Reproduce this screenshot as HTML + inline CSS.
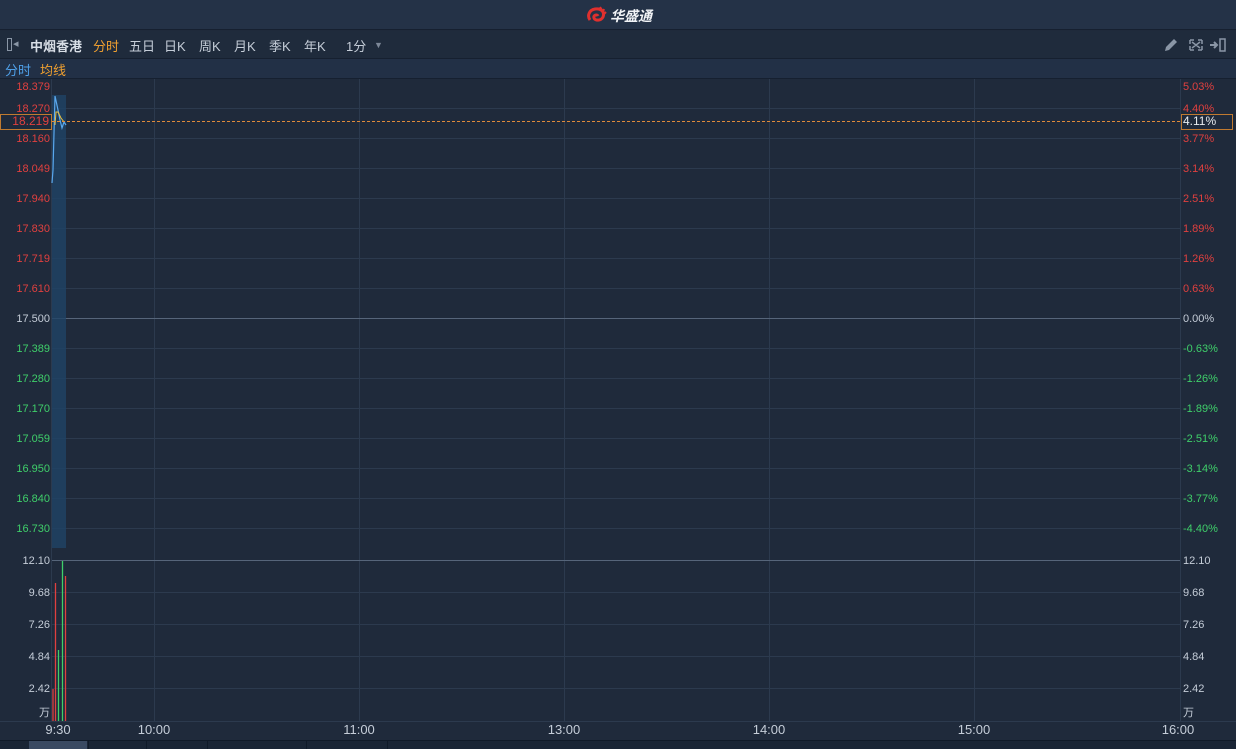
<!DOCTYPE html><html><head><meta charset="utf-8"><style>
*{margin:0;padding:0;box-sizing:border-box}
body{width:1236px;height:749px;overflow:hidden;background:#1f2a3b;font-family:"Liberation Sans","Noto Sans CJK SC",sans-serif;position:relative;font-size:13px}
.a{position:absolute;white-space:nowrap}
.l{position:absolute;left:0;width:50px;text-align:right;font-size:11px;line-height:12px}
.r{position:absolute;left:1183px;font-size:11px;line-height:12px}
.red{color:#e0403f}.grn{color:#3fcf6a}.wh{color:#c5cdd8}
.t{position:absolute;top:722px;font-size:13px;color:#c5cdd8;transform:translateX(-50%)}
</style></head><body>
<div class="a" style="left:0;top:0;width:1236px;height:30px;background:#243247;border-bottom:1px solid #162030"></div>
<svg class="a" style="left:586px;top:6px" width="22" height="18" viewBox="0 0 22 18"><path d="M4 14 C1 10 3 4 9 3 C15 2 19 6 17 11 C15 15 9 15 8 12 C7 9 11 8 12 10" stroke="#e0302e" stroke-width="3" fill="none"/><path d="M14 1 L16 4 M18 3 L17 6 M20 6 L18 8" stroke="#e0302e" stroke-width="2"/></svg>
<div class="a" style="left:610px;top:6px;font-size:14px;font-weight:bold;color:#f2f4f7;font-style:italic">华盛通</div>
<div class="a" style="left:0;top:31px;width:1236px;height:28px;background:#1f2b3c;border-bottom:1px solid #162030"></div>
<div class="a" style="left:7px;top:38px;width:5px;height:13px;border:1.5px solid #8a96a6"></div>
<div class="a" style="left:13px;top:37px;color:#8a96a6;font-size:11px">◂</div>
<div class="a" style="left:30px;top:36px;color:#d8dee6;font-weight:bold;font-size:13px">中烟香港</div>
<div class="a" style="left:93px;top:36px;color:#f0a030">分时</div>
<div class="a" style="left:129px;top:36px;color:#c5cdd8">五日</div>
<div class="a" style="left:164px;top:36px;color:#c5cdd8">日K</div>
<div class="a" style="left:199px;top:36px;color:#c5cdd8">周K</div>
<div class="a" style="left:234px;top:36px;color:#c5cdd8">月K</div>
<div class="a" style="left:269px;top:36px;color:#c5cdd8">季K</div>
<div class="a" style="left:304px;top:36px;color:#c5cdd8">年K</div>
<div class="a" style="left:346px;top:36px;color:#c5cdd8">1分</div>
<div class="a" style="left:374px;top:40px;color:#7d8898;font-size:9px">▼</div>
<svg class="a" style="left:1162px;top:37px" width="70" height="16"><path d="M3 14 L4 10 L12 2 L15 5 L7 13 Z" fill="#8a96a6"/><path d="M28 3h4M28 3v4M40 3h-4M40 3v4M28 13h4M28 13v-4M40 13h-4M40 13v-4M30 5l8 6M38 5l-8 6" stroke="#8a96a6" stroke-width="1.5" fill="none"/><path d="M48 8h6M52 5l3 3-3 3" stroke="#8a96a6" stroke-width="2" fill="none"/><rect x="58" y="2" width="5" height="12" stroke="#8a96a6" stroke-width="1.5" fill="none"/></svg>
<div class="a" style="left:0;top:59px;width:1236px;height:20px;background:#223046;border-bottom:1px solid #162030"></div>
<div class="a" style="left:5px;top:60px;color:#4fa0e8">分时</div>
<div class="a" style="left:40px;top:60px;color:#f0a030">均线</div>
<svg class="a" style="left:0;top:0" width="1236" height="749">
<g stroke="#2c3a4e" stroke-width="1">
<line x1="52" y1="108.5" x2="1180" y2="108.5"/><line x1="52" y1="138.5" x2="1180" y2="138.5"/><line x1="52" y1="168.5" x2="1180" y2="168.5"/><line x1="52" y1="198.5" x2="1180" y2="198.5"/><line x1="52" y1="228.5" x2="1180" y2="228.5"/><line x1="52" y1="258.5" x2="1180" y2="258.5"/><line x1="52" y1="288.5" x2="1180" y2="288.5"/><line x1="52" y1="348.5" x2="1180" y2="348.5"/><line x1="52" y1="378.5" x2="1180" y2="378.5"/><line x1="52" y1="408.5" x2="1180" y2="408.5"/><line x1="52" y1="438.5" x2="1180" y2="438.5"/><line x1="52" y1="468.5" x2="1180" y2="468.5"/><line x1="52" y1="498.5" x2="1180" y2="498.5"/><line x1="52" y1="528.5" x2="1180" y2="528.5"/>
<line x1="52" y1="592.5" x2="1180" y2="592.5"/><line x1="52" y1="624.5" x2="1180" y2="624.5"/><line x1="52" y1="656.5" x2="1180" y2="656.5"/><line x1="52" y1="688.5" x2="1180" y2="688.5"/><line x1="0" y1="721.5" x2="1236" y2="721.5"/>
<line x1="154.5" y1="79" x2="154.5" y2="721"/><line x1="359.5" y1="79" x2="359.5" y2="721"/><line x1="564.5" y1="79" x2="564.5" y2="721"/><line x1="769.5" y1="79" x2="769.5" y2="721"/><line x1="974.5" y1="79" x2="974.5" y2="721"/>
<line x1="51.5" y1="79" x2="51.5" y2="721"/><line x1="1180.5" y1="79" x2="1180.5" y2="721"/>
</g>
<line x1="52" y1="318.5" x2="1180" y2="318.5" stroke="#56657a"/>
<line x1="52" y1="560.5" x2="1180" y2="560.5" stroke="#56657a"/>
<rect x="52" y="95" width="14" height="453" fill="#1f4466" opacity="0.8"/>
<polyline points="52,183 53,170 55,96 58,110 60,120 62,128 64,122 66,125" fill="none" stroke="#5aa8ee" stroke-width="1.2"/>
<polyline points="55,125 56,112 58,112 61,118 64,122" fill="none" stroke="#e8c040" stroke-width="1"/>
<line x1="52" y1="121.5" x2="1180" y2="121.5" stroke="#e08a3a" stroke-dasharray="3,2"/>
<g stroke-width="1.3"><line x1="53" y1="689" x2="53" y2="721" stroke="#e0403f"/><line x1="55.5" y1="583" x2="55.5" y2="721" stroke="#e0403f"/><line x1="58.5" y1="650" x2="58.5" y2="721" stroke="#3fcf6a"/><line x1="62.5" y1="561" x2="62.5" y2="721" stroke="#3fcf6a"/><line x1="65.5" y1="576" x2="65.5" y2="721" stroke="#e0403f"/></g>
</svg>
<div class="a" style="left:0;top:114px;width:52px;height:16px;border:1px solid #c07a30;background:#1f2a3b"></div>
<div class="a" style="left:1181px;top:114px;width:52px;height:16px;border:1px solid #c07a30;background:#1f2a3b"></div>
<div class="l red" style="top:81px">18.379</div><div class="l red" style="top:103px">18.270</div>
<div class="l red" style="top:115px;font-size:12px;left:0;width:49px">18.219</div>
<div class="l red" style="top:133px">18.160</div><div class="l red" style="top:163px">18.049</div><div class="l red" style="top:193px">17.940</div><div class="l red" style="top:223px">17.830</div><div class="l red" style="top:253px">17.719</div><div class="l red" style="top:283px">17.610</div>
<div class="l wh" style="top:313px">17.500</div>
<div class="l grn" style="top:343px">17.389</div><div class="l grn" style="top:373px">17.280</div><div class="l grn" style="top:403px">17.170</div><div class="l grn" style="top:433px">17.059</div><div class="l grn" style="top:463px">16.950</div><div class="l grn" style="top:493px">16.840</div><div class="l grn" style="top:523px">16.730</div>
<div class="l wh" style="top:555px">12.10</div><div class="l wh" style="top:587px">9.68</div><div class="l wh" style="top:619px">7.26</div><div class="l wh" style="top:651px">4.84</div><div class="l wh" style="top:683px">2.42</div><div class="l wh" style="top:707px">万</div>
<div class="r red" style="top:81px">5.03%</div><div class="r red" style="top:103px">4.40%</div>
<div class="r wh" style="top:115px;font-size:12px;color:#e8ecf0">4.11%</div>
<div class="r red" style="top:133px">3.77%</div><div class="r red" style="top:163px">3.14%</div><div class="r red" style="top:193px">2.51%</div><div class="r red" style="top:223px">1.89%</div><div class="r red" style="top:253px">1.26%</div><div class="r red" style="top:283px">0.63%</div>
<div class="r wh" style="top:313px">0.00%</div>
<div class="r grn" style="top:343px">-0.63%</div><div class="r grn" style="top:373px">-1.26%</div><div class="r grn" style="top:403px">-1.89%</div><div class="r grn" style="top:433px">-2.51%</div><div class="r grn" style="top:463px">-3.14%</div><div class="r grn" style="top:493px">-3.77%</div><div class="r grn" style="top:523px">-4.40%</div>
<div class="r wh" style="top:555px">12.10</div><div class="r wh" style="top:587px">9.68</div><div class="r wh" style="top:619px">7.26</div><div class="r wh" style="top:651px">4.84</div><div class="r wh" style="top:683px">2.42</div><div class="r wh" style="top:707px">万</div>
<div class="t" style="left:58px">9:30</div><div class="t" style="left:154px">10:00</div><div class="t" style="left:359px">11:00</div><div class="t" style="left:564px">13:00</div><div class="t" style="left:769px">14:00</div><div class="t" style="left:974px">15:00</div><div class="t" style="left:1178px">16:00</div>
<div class="a" style="left:0;top:740px;width:1236px;height:9px;background:#1a2535;border-top:1px solid #101a28"></div>
<div class="a" style="left:29px;top:741px;width:58px;height:8px;background:#3a4a62"></div>
<div class="a" style="left:88px;top:741px;width:59px;height:8px;border-left:1px solid #101a28;border-right:1px solid #101a28"></div>
<div class="a" style="left:207px;top:741px;width:100px;height:8px;border-left:1px solid #101a28;border-right:1px solid #101a28"></div>
<div class="a" style="left:387px;top:741px;width:1px;height:8px;background:#101a28"></div>
</body></html>
